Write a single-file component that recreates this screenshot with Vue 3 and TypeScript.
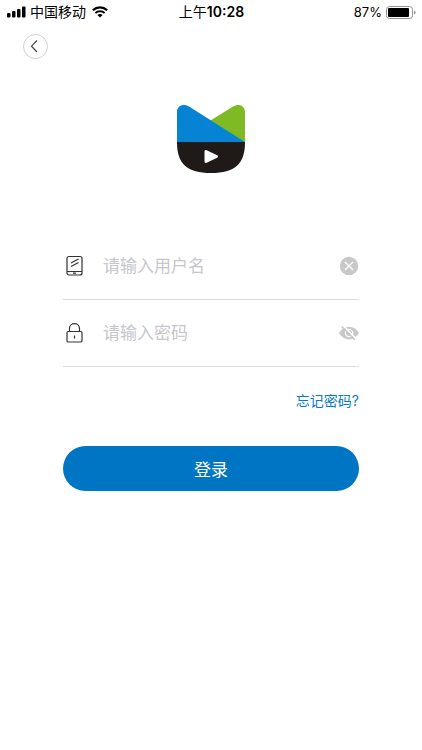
<script setup lang="ts">
import { ref } from 'vue'

const username = ref('')
const password = ref('')
const showPassword = ref(false)
</script>

<template>
  <div class="screen">
    <header class="status">
      <div class="side">
        <svg class="signal" width="19" height="12" viewBox="0 0 19 12" aria-hidden="true">
          <rect x="0" y="7" width="3.5" height="4.5" rx="1" />
          <rect x="5" y="5" width="3.5" height="6.5" rx="1" />
          <rect x="10" y="3" width="3.5" height="8.5" rx="1" />
          <rect x="15" y="0.5" width="3.5" height="11" rx="1" />
        </svg>
        <span class="carrier">中国移动</span>
        <svg class="wifi" width="16" height="12" viewBox="0 0 16 12" aria-hidden="true">
          <path d="M0.8 4.2C5 0.3 11 0.3 15.2 4.2" fill="none" stroke="#000" stroke-width="2.2" />
          <path d="M3.4 7C6 4.7 10 4.7 12.6 7" fill="none" stroke="#000" stroke-width="2" />
          <path d="M5.4 9C6.9 7.7 9.1 7.7 10.6 9L8 11.6Z" />
        </svg>
      </div>
      <time class="time">上午<b>10:28</b></time>
      <div class="side right">
        <span>87%</span>
        <svg width="30" height="13" viewBox="0 0 30 13" aria-hidden="true">
          <rect x="0.5" y="0.5" width="26" height="12" rx="3" fill="#fff" stroke="#929292" />
          <rect x="2" y="2" width="21" height="9" rx="1" />
          <path d="M28 4.5Q29.6 5 29.6 6.5T28 8.5Z" fill="#929292" />
        </svg>
      </div>
    </header>

    <nav class="nav">
      <button class="back" type="button" aria-label="返回">
        <svg width="23" height="23" viewBox="0 0 23 23">
          <path d="M13 5.5L7.5 11.2L13 17" fill="none" stroke="#444" stroke-width="1.2" />
        </svg>
      </button>
    </nav>

    <main class="content">
      <svg class="logo" width="68" height="68" viewBox="0 0 68 68" aria-hidden="true">
        <path d="M33.5 15.5L56 1.6C62-2.2 68 1 68 7V37H66Z" fill="#7fba24" />
        <path d="M0 37V7C0 1 6-2.2 12 1.6L68 37Z" fill="#0683d2" />
        <path d="M0 37H68C68 59 58 68 34 68S0 59 0 37Z" fill="#1f1918" />
        <path d="M29 46.5V56.5L39.5 51.5Z" fill="#fff" stroke="#fff" stroke-width="3" stroke-linejoin="round" />
      </svg>

      <form class="form" @submit.prevent>
        <div class="field">
          <label for="username" aria-label="用户名">
            <svg width="24" height="24" viewBox="0 0 24 24" fill="none" stroke="#333" stroke-width="1.2">
              <rect x="4" y="2.5" width="15" height="18.5" rx="2" />
              <path d="M4 17.5H19M10 19.2H13M8 9L15.5 5M8 12.5L15.5 8.5" />
            </svg>
          </label>
          <input id="username" v-model="username" type="text" placeholder="请输入用户名" />
          <button class="action" type="button" aria-label="清除" @click="username = ''">
            <svg width="20" height="20" viewBox="0 0 20 20">
              <circle cx="10" cy="10" r="9.2" fill="#c8c8c8" />
              <path d="M6 6L14 14M14 6L6 14" stroke="#fff" stroke-width="1.4" />
            </svg>
          </button>
        </div>
        <div class="field">
          <label for="password" aria-label="密码">
            <svg width="24" height="24" viewBox="0 0 24 24" fill="none" stroke="#333" stroke-width="1.2">
              <rect x="4" y="10.5" width="15" height="10.5" rx="1.2" />
              <path d="M6.5 10.5V7.5C6.5 1 16.5 1 16.5 7.5V10.5M11.5 14.5V17.5" />
            </svg>
          </label>
          <input id="password" v-model="password" :type="showPassword ? 'text' : 'password'" placeholder="请输入密码" />
          <button class="action" type="button" aria-label="显示密码" @click="showPassword = !showPassword">
            <svg width="20" height="20" viewBox="0 0 20 20" fill="none">
              <path d="M0 10C5 1.5 15 1.5 20 10C15 18.5 5 18.5 0 10Z" fill="#c8c8c8" />
              <circle cx="10" cy="10" r="3.6" stroke="#fff" stroke-width="1.3" />
              <path d="M8.5 9Q10.2 8 11.5 9.8V11.5" stroke="#fff" />
              <path d="M4 2.5L17 15.5" stroke="#fff" stroke-width="1.5" />
              <path d="M2.8 3.5L16 16.7" stroke="#c8c8c8" stroke-width="1.6" />
            </svg>
          </button>
        </div>
        <a class="forgot" href="#">忘记密码?</a>
        <button class="submit" type="submit">登录</button>
      </form>
    </main>
  </div>
</template>

<style>
body {
  margin: 0;
  background: #fff;
}
</style>

<style scoped>
.screen {
  min-height: 100vh;
  background: #fff;
  color: #000;
  font-family: Inter, "Noto Sans CJK SC", sans-serif;
}

.screen svg {
  display: block;
  flex: none;
}

.status {
  display: grid;
  grid-template-columns: 1fr auto 1fr;
  align-items: center;
  height: 24px;
  padding: 0 6px 0 7px;
  font-size: 13px;
  line-height: 24px;
}

.side {
  display: flex;
  align-items: center;
  gap: 4px;
}

.carrier,
.time {
  font-size: 14px;
}

.wifi {
  margin-left: 2px;
}

.right {
  justify-content: flex-end;
}

.time b {
  font-weight: 600;
}

.nav {
  padding: 10px 23px 0;
}

button {
  padding: 0;
  border: 0;
  background: none;
  font-family: inherit;
  cursor: pointer;
}

.back {
  display: grid;
  place-items: center;
  box-sizing: border-box;
  width: 25px;
  height: 25px;
  border: 1px solid #d2d2d2;
  border-radius: 50%;
}

.content {
  display: flex;
  flex-direction: column;
  padding: 46px 63px 0;
}

.logo {
  align-self: center;
}

.form {
  display: flex;
  flex-direction: column;
  margin-top: 60px;
}

.field {
  display: flex;
  align-items: center;
  box-sizing: border-box;
  height: 67px;
  border-bottom: 1px solid #dcdcdc;
}

.field input {
  flex: 1;
  min-width: 0;
  height: 32px;
  margin: 0 8px 0 16px;
  padding: 0;
  border: 0;
  outline: 0;
  background: none;
  color: #333;
  font-family: inherit;
  font-size: 17px;
}

.field input::placeholder {
  color: #c6c6cb;
  opacity: 1;
}

.forgot {
  align-self: flex-end;
  margin-top: 24px;
  color: #0879c4;
  font-size: 14px;
  line-height: 20px;
  text-decoration: none;
}

.submit {
  height: 45px;
  margin-top: 35px;
  border-radius: 24px;
  background: #0075c4;
  color: #fff;
  font-size: 17px;
}
</style>
